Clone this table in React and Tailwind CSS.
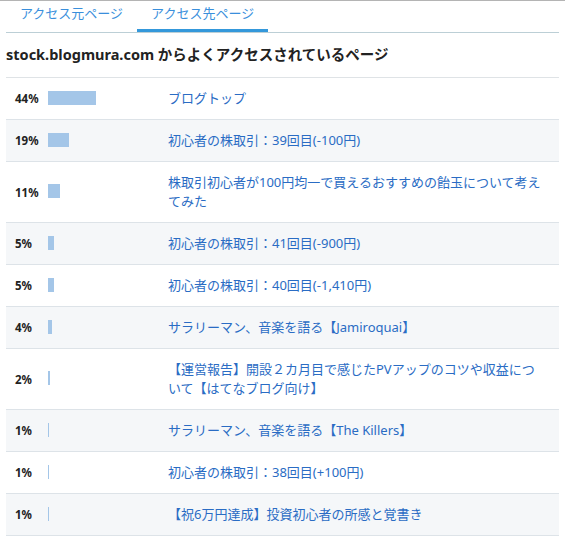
import React from "react";

const rows = [
  { pct: 44, title: "ブログトップ" },
  { pct: 19, title: "初心者の株取引：39回目(-100円)" },
  { pct: 11, title: "株取引初心者が100円均一で買えるおすすめの飴玉について考えてみた" },
  { pct: 5, title: "初心者の株取引：41回目(-900円)" },
  { pct: 5, title: "初心者の株取引：40回目(-1,410円)" },
  { pct: 4, title: "サラリーマン、音楽を語る【Jamiroquai】" },
  { pct: 2, title: "【運営報告】開設２カ月目で感じたPVアップのコツや収益について【はてなブログ向け】" },
  { pct: 1, title: "サラリーマン、音楽を語る【The Killers】" },
  { pct: 1, title: "初心者の株取引：38回目(+100円)" },
  { pct: 1, title: "【祝6万円達成】投資初心者の所感と覚書き" },
];

export default function App() {
  return (
    <div
      className="min-h-screen w-full bg-white border-t border-[#b4b4b4]"
      style={{ fontFamily: '"Noto Sans", "Noto Sans CJK JP", sans-serif' }}
    >
      <div className="mx-[6px]">
        <div className="flex border-b border-[#bccfd6]">
          <div className="h-[31px] px-[14px] pt-[2px] text-[13px] leading-[20px] text-[#3a8fdc]">
            アクセス元ページ
          </div>
          <div className="h-[31px] px-[14px] pt-[2px] text-[13px] leading-[20px] text-[#3a8fdc] border-b-[3px] border-[#3498db]">
            アクセス先ページ
          </div>
        </div>

        <h2 className="h-[45px] flex items-center text-[14.5px] font-bold text-[#222] border-b border-[#dfe3e6]">
          stock.blogmura.com からよくアクセスされているページ
        </h2>

        {rows.map((r, i) => (
          <div
            key={i}
            className={
              "flex items-center py-[11px] border-b border-[#dde3e8] " +
              (i % 2 === 1 ? "bg-[#f5f7f9]" : "bg-white")
            }
          >
            <div className="w-[42px] pl-[9px] text-[11.5px] font-bold text-[#222] leading-[19px]">
              {r.pct}%
            </div>
            <div className="w-[120px] shrink-0 flex">
              <div
                className="h-[14px] -mt-[2px] bg-[#a4c6e8]"
                style={{ width: Math.max(1, Math.round(r.pct * 1.1)) + "px" }}
              />
            </div>
            <div className="flex-1 pr-[15px] text-[13px] leading-[19px] text-[#2a6cc4]">
              {r.title}
            </div>
          </div>
        ))}
      </div>
    </div>
  );
}
